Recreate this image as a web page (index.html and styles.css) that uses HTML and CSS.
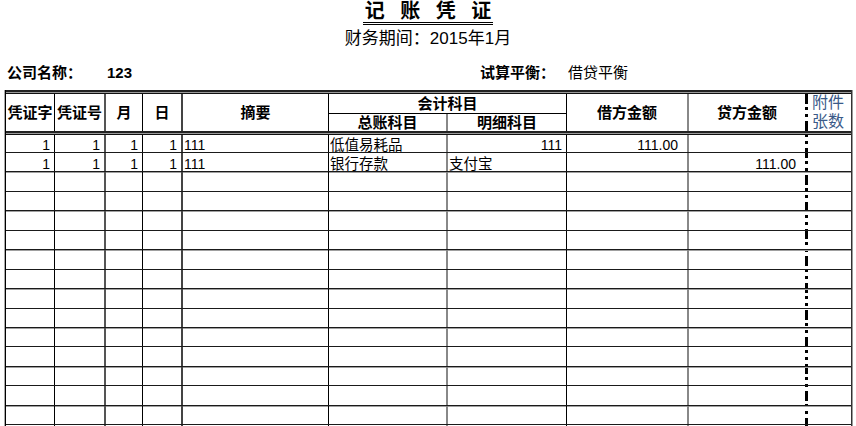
FILE: index.html
```html
<!DOCTYPE html>
<html lang="zh-CN">
<head>
<meta charset="utf-8">
<title>记账凭证</title>
<link rel="stylesheet" href="styles.css">
</head>
<body>
<div class="page">
  <div class="title-wrap">
    <h1 class="title"><span>记</span><span>账</span><span>凭</span><span>证</span></h1>
  </div>
  <div class="subtitle">财务期间：2015年1月</div>
  <div class="info">
    <span>公司名称：</span><span>123</span>
    <span>试算平衡：</span><span class="plain">借贷平衡</span>
  </div>
  <div class="sheet">
    <div class="rule"></div>
    <div class="head">
      <div class="h hc1">凭证字</div>
      <div class="h hc2">凭证号</div>
      <div class="h hc3">月</div>
      <div class="h hc4">日</div>
      <div class="h hc5">摘要</div>
      <div class="h hc67">会计科目</div>
      <div class="h hc6">总账科目</div>
      <div class="h hc7">明细科目</div>
      <div class="h hc8">借方金额</div>
      <div class="h hc9">贷方金额</div>
      <div class="h hc10">附件<br>张数</div>
    </div>
    <div class="rule"></div>
    <div class="body">
      <div class="row">
        <div class="num">1</div><div class="num">1</div><div class="num">1</div><div class="num">1</div>
        <div>111</div><div class="cjk">低值易耗品</div><div class="num">111</div>
        <div class="num amt">111.00</div><div class="num amt"></div><div></div>
      </div>
      <div class="row">
        <div class="num">1</div><div class="num">1</div><div class="num">1</div><div class="num">1</div>
        <div>111</div><div class="cjk">银行存款</div><div class="cjk">支付宝</div>
        <div class="num amt"></div><div class="num amt">111.00</div><div></div>
      </div>
      <div class="row"><div></div><div></div><div></div><div></div><div></div><div></div><div></div><div></div><div></div><div></div></div>
      <div class="row"><div></div><div></div><div></div><div></div><div></div><div></div><div></div><div></div><div></div><div></div></div>
      <div class="row"><div></div><div></div><div></div><div></div><div></div><div></div><div></div><div></div><div></div><div></div></div>
      <div class="row"><div></div><div></div><div></div><div></div><div></div><div></div><div></div><div></div><div></div><div></div></div>
      <div class="row"><div></div><div></div><div></div><div></div><div></div><div></div><div></div><div></div><div></div><div></div></div>
      <div class="row"><div></div><div></div><div></div><div></div><div></div><div></div><div></div><div></div><div></div><div></div></div>
      <div class="row"><div></div><div></div><div></div><div></div><div></div><div></div><div></div><div></div><div></div><div></div></div>
      <div class="row"><div></div><div></div><div></div><div></div><div></div><div></div><div></div><div></div><div></div><div></div></div>
      <div class="row"><div></div><div></div><div></div><div></div><div></div><div></div><div></div><div></div><div></div><div></div></div>
      <div class="row"><div></div><div></div><div></div><div></div><div></div><div></div><div></div><div></div><div></div><div></div></div>
      <div class="row"><div></div><div></div><div></div><div></div><div></div><div></div><div></div><div></div><div></div><div></div></div>
      <div class="row"><div></div><div></div><div></div><div></div><div></div><div></div><div></div><div></div><div></div><div></div></div>
      <div class="row"><div></div><div></div><div></div><div></div><div></div><div></div><div></div><div></div><div></div><div></div></div>
      <div class="row"><div></div><div></div><div></div><div></div><div></div><div></div><div></div><div></div><div></div><div></div></div>
    </div>
  </div>
</div>
</body>
</html>
```

FILE: styles.css
```css
* {
  box-sizing: border-box;
  margin: 0;
  padding: 0;
}

html, body {
  background: #fff;
}

body {
  width: 856px;
  height: 426px;
  overflow: hidden;
  font-family: "Liberation Sans", "Noto Sans CJK SC", sans-serif;
  color: #000;
}

.title-wrap {
  display: flex;
  justify-content: center;
  padding-top: 1px;
  height: 25px;
}

.title {
  display: flex;
  gap: 15.5px;
  padding: 0 2px;
  font-size: 20px;
  font-weight: 700;
  line-height: 21px;
  border-bottom: 3px double #000;
}

.subtitle {
  margin-top: 4px;
  text-align: center;
  font-size: 17px;
  line-height: 20px;
}

.info {
  display: grid;
  grid-template-columns: 100px 373px 88px auto;
  margin-top: 14px;
  padding-left: 7px;
  font-size: 15px;
  line-height: 19px;
  font-weight: 700;
}

.info .plain {
  font-weight: 400;
}

.sheet {
  margin: 8px 0 0 5px;
  width: 847px;
  border-left: 1px solid #000;
  border-right: 1px solid #333;
  box-shadow: -1px 0 0 #aaa, 1px 0 0 #999;
  background-image: repeating-linear-gradient(to bottom,
    #000 0 10px, transparent 10px 13px,
    #000 13px 16px, transparent 16px 20px,
    #000 20px 23px, transparent 23px 27px);
  background-size: 3px 100%;
  background-position: 799px 4px;
  background-repeat: no-repeat;
}

.rule {
  height: 4px;
  background: linear-gradient(to bottom, #222 0 2px, #9a9a9a 2px 3px, #111 3px 4px);
}

.head,
.row {
  display: grid;
  grid-template-columns: 49px 51px 37px 40px 146px 119px 119px 122px 119px 43px;
}

.head {
  grid-template-rows: 20px 17px;
  height: 37px;
}

.h {
  display: flex;
  align-items: center;
  justify-content: center;
  font-size: 15px;
  font-weight: 700;
  line-height: 19px;
  white-space: nowrap;
}

.hc1 { grid-column: 1; grid-row: 1 / 3; border-right: 1px solid #000; }
.hc2 { grid-column: 2; grid-row: 1 / 3; border-right: 2px solid #555; }
.hc3 { grid-column: 3; grid-row: 1 / 3; border-right: 1px solid #000; }
.hc4 { grid-column: 4; grid-row: 1 / 3; border-right: 2px solid #444; }
.hc5 { grid-column: 5; grid-row: 1 / 3; border-right: 1px solid #000; }
.hc67 { grid-column: 6 / 8; grid-row: 1; border-right: 1px solid #000; border-bottom: 1px solid #000; }
.hc6 { grid-column: 6; grid-row: 2; border-right: 2px solid #888; }
.hc7 { grid-column: 7; grid-row: 2; border-right: 1px solid #000; }
.hc8 { grid-column: 8; grid-row: 1 / 3; border-right: 2px solid #888; }
.hc9 { grid-column: 9; grid-row: 1 / 3; border-right: 3px solid transparent; }
.hc10 {
  grid-column: 10;
  grid-row: 1 / 3;
  justify-content: flex-start;
  padding-left: 4px;
  font-size: 16px;
  font-weight: 400;
  line-height: 18.5px;
  color: #3a5a88;
}

.row {
  height: 19.45px;
  border-bottom: 1px solid #1a1a1a;
}

.row:first-child {
  height: 18px;
}

.body .row:nth-child(even) {
  box-shadow: 0 1px 0 #a0a0a0;
}

.row > div {
  display: flex;
  align-items: flex-end;
  padding: 0 4px 0 1px;
  font-size: 14px;
  line-height: 13px;
  white-space: nowrap;
  overflow: hidden;
}

.row > div:nth-child(1) { border-right: 1px solid #000; }
.row > div:nth-child(2) { border-right: 2px solid #555; }
.row > div:nth-child(3) { border-right: 1px solid #000; }
.row > div:nth-child(4) { border-right: 2px solid #444; }
.row > div:nth-child(5) { border-right: 1px solid #000; }
.row > div:nth-child(6) { border-right: 2px solid #888; }
.row > div:nth-child(7) { border-right: 1px solid #000; }
.row > div:nth-child(8) { border-right: 2px solid #888; }
.row > div:nth-child(9) { border-right: 3px solid transparent; }

.row > .num {
  justify-content: flex-end;
}

.row > .amt {
  padding-right: 9px;
}

.row > .cjk {
  font-size: 14.5px;
}
```
